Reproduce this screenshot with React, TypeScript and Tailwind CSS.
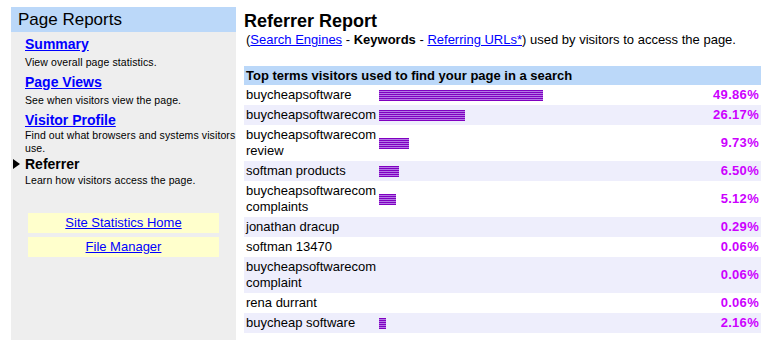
import React from 'react';

// Rows of the keyword report: term, share and bar width in px
interface KeywordRow {
  term: string[];
  pct: string;
  bar: number;
}

const rows: KeywordRow[] = [
  { term: ['buycheapsoftware'], pct: '49.86%', bar: 164 },
  { term: ['buycheapsoftwarecom'], pct: '26.17%', bar: 86 },
  { term: ['buycheapsoftwarecom', 'review'], pct: '9.73%', bar: 30 },
  { term: ['softman products'], pct: '6.50%', bar: 20 },
  { term: ['buycheapsoftwarecom', 'complaints'], pct: '5.12%', bar: 17 },
  { term: ['jonathan dracup'], pct: '0.29%', bar: 0 },
  { term: ['softman 13470'], pct: '0.06%', bar: 0 },
  { term: ['buycheapsoftwarecom', 'complaint'], pct: '0.06%', bar: 0 },
  { term: ['rena durrant'], pct: '0.06%', bar: 0 },
  { term: ['buycheap software'], pct: '2.16%', bar: 7 },
];

const navItems = [
  { label: 'Summary', desc: ['View overall page statistics.'], tight: false },
  { label: 'Page Views', desc: ['See when visitors view the page.'], tight: false },
  { label: 'Visitor Profile', desc: ['Find out what browsers and systems visitors', 'use.'], tight: true },
];

function Sidebar() {
  return (
    <div className="w-[225px] shrink-0 bg-[#eeeeee] min-h-[333px]">
      <div className="h-[25px] bg-[#bbd8f9] pl-[7px] text-[17px] leading-[25px] text-black">Page Reports</div>
      <div className="pl-[14px] pt-[3px]">
        {navItems.map((item) => (
          <div key={item.label} className={item.tight ? 'mb-0' : 'mb-[4px]'}>
            <a href="#" className="block text-[14px] leading-[18px] font-bold text-[#0000ff] underline">
              {item.label}
            </a>
            <div className={item.tight ? 'mt-0' : 'mt-[3px]'}>
              {item.desc.map((d) => (
                <div key={d} className="text-[10.5px] leading-[13px] text-black tracking-[0.1px]">{d}</div>
              ))}
            </div>
          </div>
        ))}
        <div className="relative">
          <svg className="absolute -left-[12px] top-[4px]" width="7" height="10" viewBox="0 0 7 10">
            <polygon points="0,0 7,5 0,10" fill="#000" />
          </svg>
          <div className="text-[14px] leading-[18px] font-bold text-black">Referrer</div>
          <div className="mt-[1px] text-[10.5px] leading-[13px] text-black tracking-[0.1px]">
            Learn how visitors access the page.
          </div>
        </div>
      </div>
      <div className="flex flex-col gap-[4px] pl-[17px] pr-[17px] mt-[26px]">
        <div className="h-[20px] bg-[#ffffcc] text-center text-[13px] leading-[20px]">
          <a href="#" className="text-[#0000ff] underline">Site Statistics Home</a>
        </div>
        <div className="h-[20px] bg-[#ffffcc] text-center text-[13px] leading-[20px]">
          <a href="#" className="text-[#0000ff] underline">File Manager</a>
        </div>
      </div>
    </div>
  );
}

function Report() {
  return (
    <div className="w-[517px] shrink-0">
      <h1 className="text-[18px] leading-[22px] font-bold text-black pt-[3px]">Referrer Report</h1>
      <p className="text-[13px] leading-[16px] text-black pl-[2px]">
        (<a href="#" className="text-[#0000ff] underline">Search Engines</a> - <b>Keywords</b> -{' '}
        <a href="#" className="text-[#0000ff] underline">Referring URLs*</a>) used by visitors to access the page.
      </p>
      <div className="mt-[18px]">
        <div className="h-[19px] bg-[#bbd8f9] pl-[2px] text-[13px] leading-[19px] font-bold text-black">
          Top terms visitors used to find your page in a search
        </div>
        {rows.map((r, i) => (
          <div
            key={i}
            className={`grid grid-cols-[135px_1fr_auto] items-center py-[2px] ${i % 2 === 1 ? 'bg-[#eeeefc]' : 'bg-white'}`}
          >
            <div className="pl-[2px] text-[13px] leading-[16px] text-black">
              {r.term.map((t) => (
                <div key={t}>{t}</div>
              ))}
            </div>
            <div>
              {r.bar > 0 && (
                <div
                  className="h-[11px] bg-[repeating-linear-gradient(#8000c0_0_1px,#b478e6_1px_2px)]"
                  style={{ width: r.bar }}
                />
              )}
            </div>
            <div className="pr-[2px] text-[13px] leading-[16px] font-bold text-[#cc00ff] text-right tracking-[0.3px]">
              {r.pct}
            </div>
          </div>
        ))}
      </div>
    </div>
  );
}

export default function App() {
  return (
    <div className="w-[769px] h-[340px] bg-white flex gap-[8px] pl-[11px] pt-[7px] font-['Liberation_Sans',Arial,sans-serif] overflow-hidden">
      <Sidebar />
      <Report />
    </div>
  );
}
